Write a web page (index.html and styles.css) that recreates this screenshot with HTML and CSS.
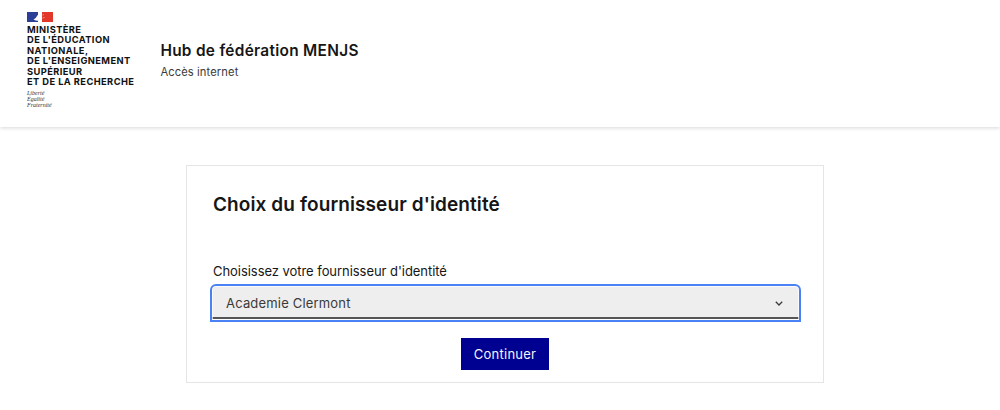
FILE: index.html
```html
<!DOCTYPE html>
<html lang="fr">
<head>
<meta charset="utf-8">
<title>Hub de fédération MENJS</title>
<link rel="stylesheet" href="styles.css">
</head>
<body>
<header class="header">
  <div class="logo">
    <svg class="flag" viewBox="0 0 26 10" aria-hidden="true">
      <rect width="26" height="10" fill="#fff"/>
      <rect width="11" height="10" fill="#2a3f95"/>
      <rect x="15" width="11" height="10" fill="#e1382b"/>
      <path d="M6.5 7.5 Q9 6.5 10 4 L11.5 2 L14.5 2.2 L15 5 L14 7 L15 9 L11 8.7 Q8.5 8.7 6.5 7.5Z" fill="#fff"/>
      <path d="M15.5 3 L17 2.5 M15.5 6 L17.5 5.5" stroke="#f5c9c9" stroke-width=".6"/>
    </svg>
    <div class="ministry">MINISTÈRE<br>DE L'ÉDUCATION<br>NATIONALE,<br>DE L'ENSEIGNEMENT<br>SUPÉRIEUR<br>ET DE LA RECHERCHE</div>
    <div class="motto">Liberté<br>Égalité<br>Fraternité</div>
  </div>
  <div class="service">
    <div class="service-title">Hub de fédération MENJS</div>
    <div class="service-tag">Accès internet</div>
  </div>
</header>
<main class="main">
  <section class="card">
    <h1 class="title">Choix du fournisseur d'identité</h1>
    <label class="label">Choisissez votre fournisseur d'identité</label>
    <div class="select">
      <span>Academie Clermont</span>
      <svg class="chevron" viewBox="0 0 8 5" aria-hidden="true"><path d="M.8.8 4 4 7.2.8" fill="none" stroke="#3a3a3a" stroke-width="1.3"/></svg>
    </div>
    <div class="actions"><button class="button">Continuer</button></div>
  </section>
</main>
</body>
</html>
```
FILE: styles.css
```css
* { box-sizing: border-box; }
html, body { margin: 0; height: 100%; overflow: hidden; }
body {
  background: #fff;
  color: #161616;
  font-family: "Inter", "Liberation Sans", sans-serif;
}
.header {
  display: flex;
  align-items: center;
  gap: 26px;
  height: 127px;
  padding: 0 0 0 27px;
  box-shadow: 0 1px 4px rgba(0, 0, 18, .16);
}
.logo { display: flex; flex-direction: column; align-self: flex-start; padding-top: 12px; }
.flag { display: block; width: 26px; height: 10px; margin-bottom: 3px; }
.ministry {
  font-size: 9.3px;
  font-weight: 700;
  line-height: 10.4px;
  letter-spacing: .42px;
  color: #111;
  white-space: nowrap;
}
.motto {
  margin-top: 3px;
  font-family: "Liberation Serif", serif;
  font-style: italic;
  font-size: 6px;
  line-height: 6px;
  color: #333;
}
.service { padding-bottom: 9px; }
.service-title { font-size: 15.4px; font-weight: 600; line-height: 24px; letter-spacing: .3px; }
.service-tag { font-size: 11.2px; line-height: 16px; color: #3a3a3a; margin-top: 1px; letter-spacing: .1px; }
.main { display: flex; justify-content: center; padding: 38px 0 0 10px; }
.card {
  width: 638px;
  height: 218px;
  border: 1px solid #e5e5e5;
  padding: 26px 24px 0 26px;
}
.title { margin: 0 0 45px; font-size: 19px; font-weight: 600; line-height: 26px; letter-spacing: .1px; }
.label { display: block; font-size: 13px; line-height: 16px; color: #161616; margin-bottom: 6px; letter-spacing: -.05px; }
.select {
  display: flex;
  align-items: center;
  justify-content: space-between;
  width: 591px;
  height: 38px;
  margin-left: -3px;
  margin-top: -1px;
  padding: 0 16px 0 14px;
  background: #eee;
  border: 2px solid #4a82f5;
  border-radius: 6px 6px 0 0;
  box-shadow: inset 0 0 0 .7px #fff, inset 0 -1px 0 #fff, inset 0 -3px 0 #555;
  font-size: 13px;
  letter-spacing: .18px;
  color: #3a3a3a;
}
.chevron { width: 8px; height: 5px; }
.actions { display: flex; justify-content: center; margin-top: 16px; padding-right: 2px; }
.button {
  width: 88px;
  height: 32px;
  border: 0;
  padding: 0;
  background: #000091;
  color: #f5f5fe;
  font: 400 13px "Inter", "Liberation Sans", sans-serif;
  letter-spacing: .25px;
}
```
